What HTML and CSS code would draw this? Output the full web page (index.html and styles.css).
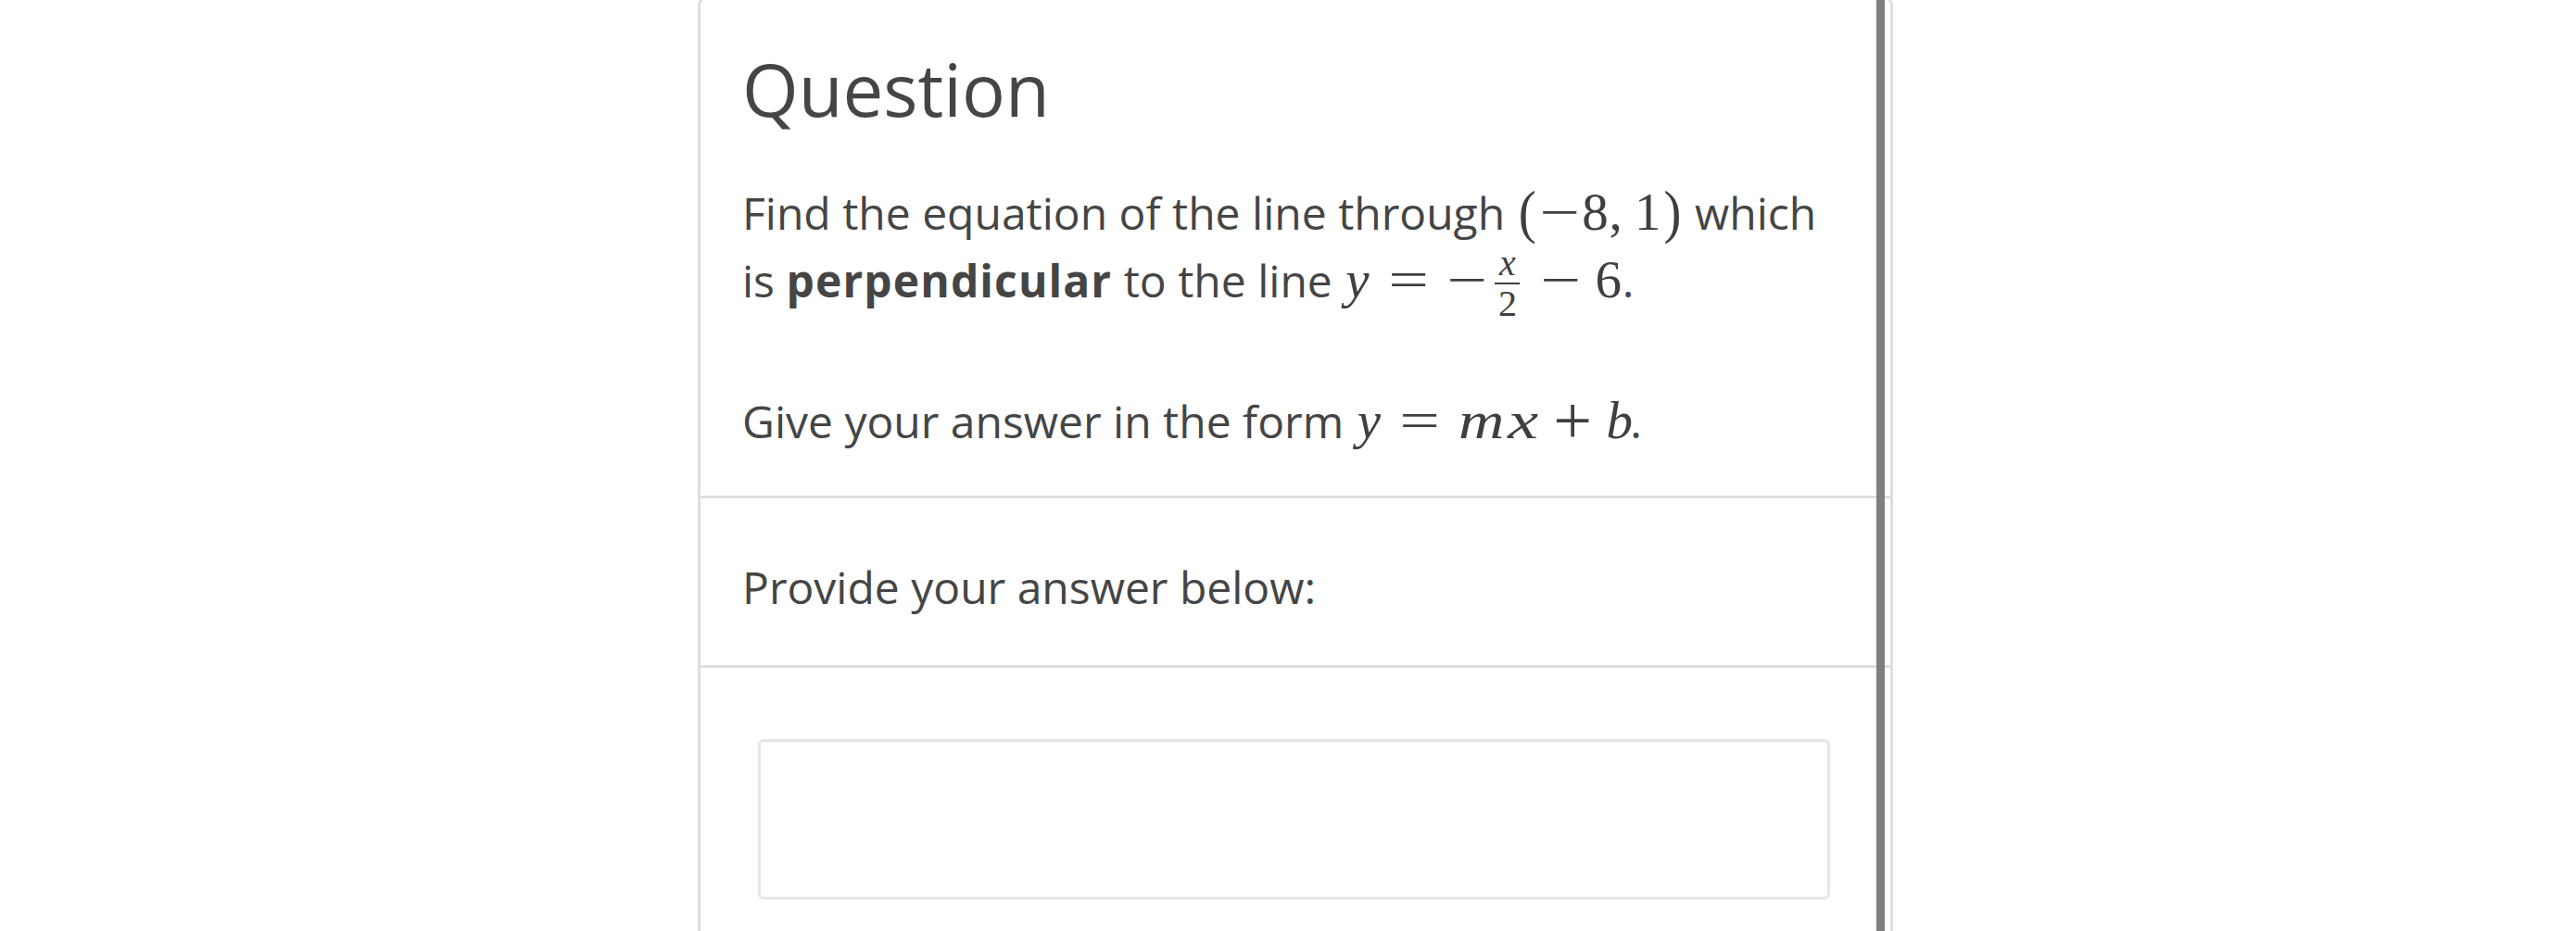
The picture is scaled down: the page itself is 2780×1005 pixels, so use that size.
FILE: index.html
```html
<!DOCTYPE html>
<html lang="en">
<head>
<meta charset="utf-8">
<title>Question</title>
<link rel="stylesheet" href="styles.css">
</head>
<body>
<div class="page">
  <div class="card">
    <div class="thumb"></div>
    <section class="sec sec-q">
      <h2 class="title">Question</h2>
      <p class="p1">Find the equation of the line through <span class="math"><span class="g paren"><span class="s-paren">(</span></span><span class="g op"><span class="s-op">−</span></span><span class="g dig">8</span><span class="g punct">,</span><span class="g dig">1</span><span class="g paren"><span class="s-paren">)</span></span></span> which is <strong>perpendicular</strong> to the line <span class="math"><span class="g mi w-y">y</span><span class="g op rel"><span class="s-op">=</span></span><span class="g op"><span class="s-op">−</span></span><span class="frac"><span class="num"><span class="mi">x</span></span><span class="den">2</span></span><span class="g op bin"><span class="s-op">−</span></span><span class="g dig">6</span></span>.</p>
      <p class="p2">Give your answer in the form <span class="math"><span class="g mi w-y">y</span><span class="g op rel"><span class="s-op">=</span></span><span class="g mi w-m"><span class="s-m">m</span></span><span class="g mi w-x"><span class="s-x">x</span></span><span class="g op bin-plus"><span class="s-plus">+</span></span><span class="g mi w-b">b</span></span>.</p>
    </section>
    <section class="sec sec-prompt">
      <p class="prompt">Provide your answer below:</p>
    </section>
    <section class="sec sec-input">
      <div class="answer-box"></div>
    </section>
  </div>
</div>
</body>
</html>
```

FILE: styles.css
```css
html, body {
  margin: 0;
  padding: 0;
  background: #ffffff;
  overflow: hidden;
}

.page {
  display: flex;
  padding-left: 753px;
}

.card {
  position: relative;
  width: 1290px;
  box-sizing: border-box;
  margin-top: -3px;
  border: 3px solid #dedede;
  border-radius: 8px;
  background: #ffffff;
  min-height: 1100px;
  font-family: "Open Sans", "Noto Sans", sans-serif;
  color: #454545;
  font-size: 48px;
  line-height: 72px;
}

.thumb {
  position: absolute;
  top: 0;
  bottom: 0;
  right: 6px;
  width: 9px;
  background: #7f7f7f;
}

.sec {
  border-bottom: 3px solid #dedede;
}

.sec-q {
  padding: 50px 60px 44px 45px;
}

.title {
  margin: 0 0 51px 0;
  font-size: 78px;
  font-weight: 400;
  line-height: 92px;
}

.p1, .p2, .prompt {
  margin: 0;
}

.p2 {
  margin-top: 79px;
}

strong {
  font-weight: 700;
  letter-spacing: 1.1px;
}

.sec-prompt {
  padding: 60px 44px 48px 45px;
}

.sec-input {
  border-bottom: none;
  padding: 77px 65px 60px 62px;
}

.answer-box {
  height: 173px;
  box-sizing: border-box;
  border: 3px solid #e6e6e6;
  border-radius: 6px;
  background: #ffffff;
}

/* ---------- math (Computer Modern metrics at 60px) ---------- */
.math {
  font-family: "Liberation Serif", "DejaVu Serif", serif;
  font-size: 57px;
  white-space: nowrap;
  color: #3f3f3f;
}

.mi {
  font-style: italic;
}

.g {
  display: inline-block;
  text-align: center;
}

.paren { width: 23.3px; }
.s-paren {
  display: inline-block;
  transform: scaleY(1.12);
}

.op { width: 46.7px; }
.s-op {
  display: inline-block;
  transform: scaleX(1.36);
}
.s-plus {
  display: inline-block;
  transform: scale(1.3);
}

.rel { margin: 0 16.7px; }
.bin { margin: 0 13.3px; }
.bin-plus { margin: 0 13px 0 12px; }

.dig { width: 30px; }

.punct {
  width: 16.7px;
  margin-right: 10px;
  text-align: left;
}

.w-y { width: 29.4px; }
.w-m { width: 52.7px; }
.w-x { width: 37px; }
.w-b { width: 25.7px; }

.s-m {
  display: inline-block;
  transform: scaleX(1.2);
}
.s-x {
  display: inline-block;
  transform: scaleX(1.3);
}

.frac {
  display: inline-flex;
  flex-direction: column;
  align-items: center;
  width: 27px;
  font-size: 40px;
  line-height: 40px;
  vertical-align: 23.6px;
  margin: -4px 7px -10px 7px;
}

.num {
  display: block;
  align-self: stretch;
  text-align: center;
  padding-bottom: 1px;
  border-bottom: 2px solid #3f3f3f;
}

.den {
  display: block;
  margin-top: 1px;
}
```
